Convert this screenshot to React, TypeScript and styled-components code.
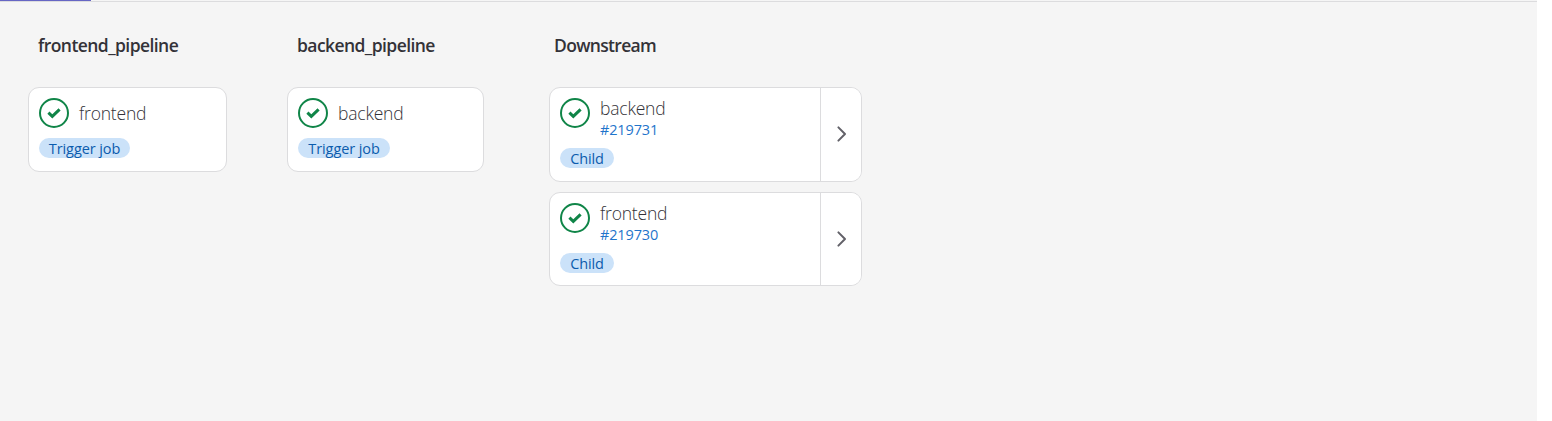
import React from 'react';
import styled, { createGlobalStyle } from 'styled-components';

const GlobalStyle = createGlobalStyle`
  * { box-sizing: border-box; }
  body {
    margin: 0;
    background: #fff;
    overflow: hidden;
    font-family: 'Segoe UI', 'Open Sans', 'Noto Sans', sans-serif;
    color: #333238;
  }
`;

const Page = styled.main`
  width: 1537px;
  height: 421px;
  display: flex;
  flex-direction: column;
  background: #f5f5f5;
`;

const TabBorder = styled.div`
  height: 2px;
  flex: none;
  display: flex;
  align-items: flex-start;
  border-bottom: 1px solid #dcdcde;
`;

const ActiveTab = styled.span`
  width: 91px;
  height: 1px;
  background: #6666c4;
`;

const Graph = styled.div`
  display: flex;
  align-items: flex-start;
  padding: 31px 0 0 28px;
`;

const Stage = styled.section<{ $width: number; $gap: number }>`
  width: ${(p) => p.$width}px;
  margin-right: ${(p) => p.$gap}px;
  display: flex;
  flex-direction: column;
`;

const StageTitle = styled.h2<{ $indent: number; $spacing: number }>`
  margin: 0 0 29px;
  padding-left: ${(p) => p.$indent}px;
  height: 25px;
  font-size: 17.5px;
  line-height: 25px;
  font-weight: 600;
  letter-spacing: ${(p) => p.$spacing}px;
  white-space: nowrap;
`;

const Card = styled.article<{ $height: number }>`
  display: flex;
  height: ${(p) => p.$height}px;
  margin-bottom: 10px;
  border: 1px solid #dcdcde;
  border-radius: 11px;
  background: #fff;
  overflow: hidden;
`;

const CardBody = styled.div`
  flex: 1;
  padding: 10px;
`;

const JobRow = styled.div<{ $linked?: boolean }>`
  display: flex;
  align-items: flex-start;
  gap: 10px;
  height: ${(p) => (p.$linked ? 50 : 40)}px;
`;

const JobText = styled.div<{ $linked?: boolean }>`
  display: flex;
  flex-direction: column;
  padding-top: ${(p) => (p.$linked ? 0 : 5)}px;
`;

const JobName = styled.span<{ $spacing: number }>`
  height: 21px;
  font-size: 17.5px;
  line-height: 21px;
  font-weight: 300;
  letter-spacing: ${(p) => p.$spacing}px;
`;

const PipelineLink = styled.a`
  height: 22px;
  font-size: 14.5px;
  line-height: 22px;
  letter-spacing: -0.15px;
  color: #1f75cb;
  text-decoration: none;
`;

const Badge = styled.span<{ $width: number }>`
  display: flex;
  align-items: center;
  justify-content: center;
  width: ${(p) => p.$width}px;
  height: 20px;
  padding-top: 2px;
  border-radius: 10px;
  background: #cbe2f9;
  color: #0b5cad;
  font-size: 14.5px;
  line-height: 20px;
  letter-spacing: -0.1px;
  white-space: nowrap;
`;

const ExpandButton = styled.button`
  width: 41px;
  padding: 0 0 1px 1px;
  display: flex;
  align-items: center;
  justify-content: center;
  border: 0;
  border-left: 1px solid #dcdcde;
  background: #fff;
`;

const Icon = styled.svg`
  display: block;
  flex: none;
`;

const PassedIcon = () => (
  <Icon width="30" height="30" viewBox="0 0 30 30" fill="none" stroke="#108548">
    <circle cx="15" cy="15" r="14" strokeWidth="2" />
    <path d="M9.4 14.6 13.3 18.4 20.6 11.3" strokeWidth="3" />
  </Icon>
);

const ChevronIcon = () => (
  <Icon width="12" height="18" viewBox="0 0 12 18" fill="none" stroke="#626168">
    <path d="M2.4 2.4 9 9l-6.6 6.6" strokeWidth="2" strokeLinecap="round" strokeLinejoin="round" />
  </Icon>
);

interface JobProps {
  name: string;
  spacing: number;
  badge: string;
  badgeWidth: number;
  height: number;
  pipeline?: string;
}

const Job = ({ name, spacing, badge, badgeWidth, height, pipeline }: JobProps) => (
  <Card $height={height}>
    <CardBody>
      <JobRow $linked={!!pipeline}>
        <PassedIcon />
        <JobText $linked={!!pipeline}>
          <JobName $spacing={spacing}>{name}</JobName>
          {pipeline && <PipelineLink>{pipeline}</PipelineLink>}
        </JobText>
      </JobRow>
      <Badge $width={badgeWidth}>{badge}</Badge>
    </CardBody>
    {pipeline && (
      <ExpandButton aria-label="Expand pipeline">
        <ChevronIcon />
      </ExpandButton>
    )}
  </Card>
);

export default function App() {
  return (
    <>
      <GlobalStyle />
      <Page>
        <TabBorder>
          <ActiveTab />
        </TabBorder>
        <Graph>
          <Stage $width={199} $gap={60}>
            <StageTitle $indent={10} $spacing={-0.57}>frontend_pipeline</StageTitle>
            <Job name="frontend" spacing={-0.2} badge="Trigger job" badgeWidth={91} height={85} />
          </Stage>
          <Stage $width={197} $gap={65}>
            <StageTitle $indent={10} $spacing={-0.57}>backend_pipeline</StageTitle>
            <Job name="backend" spacing={-0.2} badge="Trigger job" badgeWidth={92} height={85} />
          </Stage>
          <Stage $width={313} $gap={0}>
            <StageTitle $indent={5} $spacing={-0.68}>Downstream</StageTitle>
            <Job name="backend" spacing={-0.2} badge="Child" badgeWidth={54} height={95} pipeline="#219731" />
            <Job name="frontend" spacing={-0.2} badge="Child" badgeWidth={54} height={94} pipeline="#219730" />
          </Stage>
        </Graph>
      </Page>
    </>
  );
}
